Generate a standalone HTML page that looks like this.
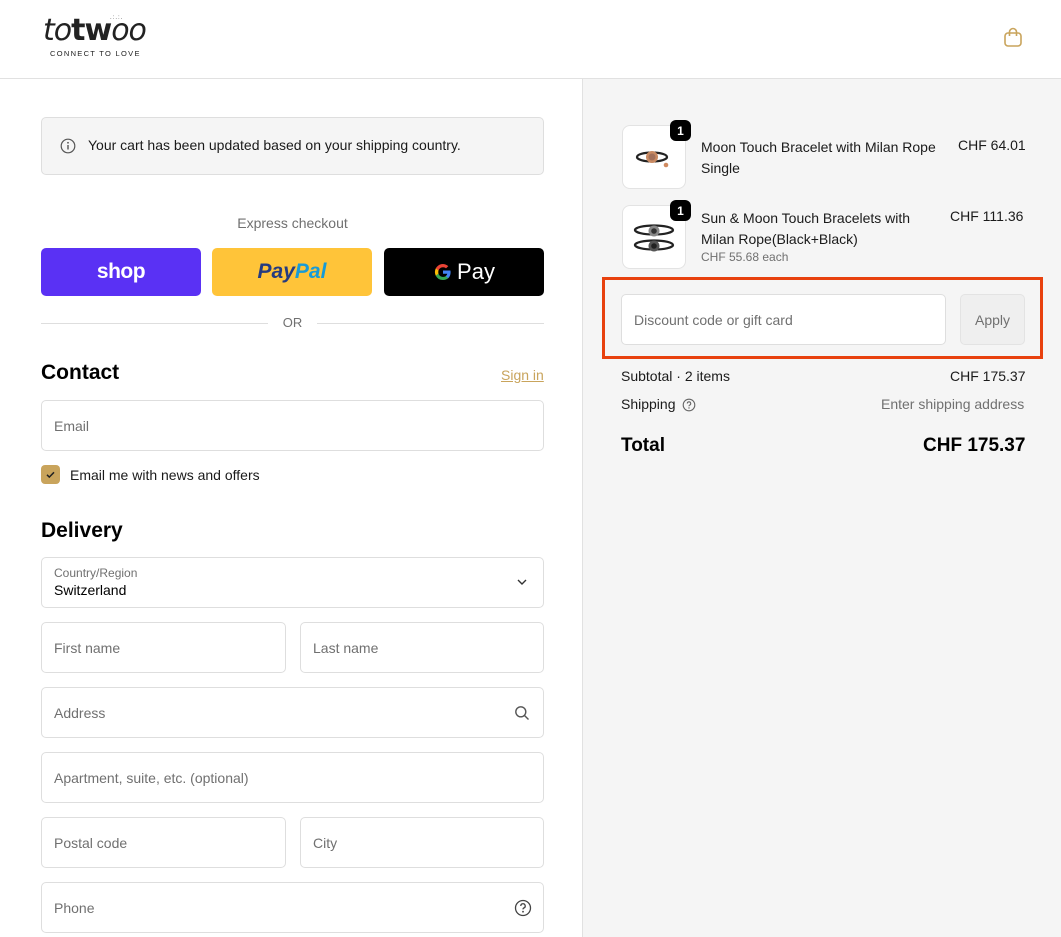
<!DOCTYPE html>
<html><head><meta charset="utf-8"><style>
*{box-sizing:border-box;margin:0;padding:0}
body{width:1061px;height:937px;overflow:hidden;background:#fff;font-family:"Liberation Sans",Arial,sans-serif;color:#000;position:relative;font-size:14px}
.a{position:absolute}
.in{position:absolute;border:1px solid #dedede;border-radius:5px;background:#fff;color:#707070;font-size:14px;padding-left:12px;display:flex;align-items:center}
.hdr{left:0;top:0;width:1061px;height:79px;border-bottom:1px solid #e1e1e1}
.right{left:582px;top:79px;width:479px;height:858px;background:#f5f5f5;border-left:1px solid #e1e1e1}
.thumb{position:absolute;width:64px;height:64px;border:1px solid #e3e3e3;border-radius:8px;background:#fff}
.badge{position:absolute;width:21px;height:21px;border-radius:6px;background:#000;color:#fff;font-size:12px;font-weight:bold;display:flex;align-items:center;justify-content:center}
</style></head><body>
<div class="a hdr"></div>
<div class="a" style="left:43px;top:12px;font-family:'DejaVu Sans',sans-serif;font-style:italic;font-weight:300;font-size:30px;letter-spacing:-1px;line-height:38px;color:#222">to<span style="font-style:normal;font-weight:bold;font-family:'DejaVu Sans'">tw</span>oo</div>
<div class="a" style="left:110px;top:15px;font-size:6px;color:#555;letter-spacing:1px">.:.:.</div>
<div class="a" style="left:50px;top:49px;font-size:7.5px;letter-spacing:1.3px;color:#222">CONNECT TO LOVE</div>
<svg class="a" style="left:1002px;top:26px" width="22" height="22" viewBox="0 0 22 22"><rect x="3" y="7" width="16" height="13" rx="3" fill="none" stroke="#c9a45c" stroke-width="1.6"/><path d="M7.5 10V6a3.5 3.5 0 0 1 7 0v4" fill="none" stroke="#c9a45c" stroke-width="1.6"/></svg>

<div class="a right"></div>

<div class="a" style="left:41px;top:117px;width:503px;height:58px;background:#f5f5f5;border:1px solid #dedede;border-radius:5px"></div>
<svg class="a" style="left:60px;top:138px" width="16" height="16" viewBox="0 0 16 16"><circle cx="8" cy="8" r="6.8" fill="none" stroke="#555" stroke-width="1.2"/><path d="M8 7v4.5" stroke="#555" stroke-width="1.4"/><circle cx="8" cy="4.8" r="0.9" fill="#555"/></svg>
<div class="a" style="left:88px;top:137px;font-size:14px;color:#1a1a1a">Your cart has been updated based on your shipping country.</div>

<div class="a" style="left:41px;top:215px;width:503px;text-align:center;color:#707070;font-size:14px">Express checkout</div>
<div class="a" style="left:41px;top:248px;width:160px;height:48px;background:#5a31f4;border-radius:5px;color:#fff;font-weight:bold;font-size:21px;display:flex;align-items:center;justify-content:center;letter-spacing:-0.5px">shop</div>
<div class="a" style="left:212px;top:248px;width:160px;height:48px;background:#ffc439;border-radius:5px;font-weight:bold;font-style:italic;font-size:21px;display:flex;align-items:center;justify-content:center"><span style="color:#253b80">Pay</span><span style="color:#179bd7">Pal</span></div>
<div class="a" style="left:384px;top:248px;width:160px;height:48px;background:#000;border-radius:5px;color:#fff;font-size:22px;display:flex;align-items:center;justify-content:center"><svg width="20" height="20" viewBox="0 0 20 20" style="margin-right:4px"><path d="M17.6 10.2c0-.6-.1-1.1-.2-1.7H10v3.2h4.3a3.7 3.7 0 0 1-1.6 2.4v2h2.6c1.5-1.4 2.3-3.4 2.3-5.9z" fill="#4285f4"/><path d="M10 18c2.2 0 4-.7 5.3-1.9l-2.6-2c-.7.5-1.6.8-2.7.8-2.1 0-3.9-1.4-4.5-3.3H2.8v2.1A8 8 0 0 0 10 18z" fill="#34a853"/><path d="M5.5 11.6a4.8 4.8 0 0 1 0-3.1V6.4H2.8a8 8 0 0 0 0 7.2z" fill="#fbbc05"/><path d="M10 5.2c1.2 0 2.2.4 3 1.2l2.3-2.3A8 8 0 0 0 2.8 6.4l2.7 2.1C6.1 6.6 7.9 5.2 10 5.2z" fill="#ea4335"/></svg>Pay</div>

<div class="a" style="left:41px;top:323px;width:227px;border-top:1px solid #dedede"></div>
<div class="a" style="left:317px;top:323px;width:227px;border-top:1px solid #dedede"></div>
<div class="a" style="left:270px;top:315px;width:45px;text-align:center;color:#707070;font-size:13px">OR</div>

<div class="a" style="left:41px;top:361px;font-size:21px;font-weight:bold">Contact</div>
<div class="a" style="left:501px;top:367px;font-size:14px;color:#c9a45c;text-decoration:underline">Sign in</div>
<div class="in" style="left:41px;top:400px;width:503px;height:51px">Email</div>
<div class="a" style="left:41px;top:465px;width:19px;height:19px;border-radius:4px;background:#c9a45c"></div>
<svg class="a" style="left:44px;top:468px" width="13" height="13" viewBox="0 0 13 13"><path d="M3 6.8l2.3 2.3L10 4.3" fill="none" stroke="#222" stroke-width="1.5"/></svg>
<div class="a" style="left:70px;top:467px;font-size:14px;color:#1a1a1a">Email me with news and offers</div>

<div class="a" style="left:41px;top:519px;font-size:21px;font-weight:bold">Delivery</div>
<div class="in" style="left:41px;top:557px;width:503px;height:51px;display:block;padding-top:8px"><div style="font-size:12px;color:#707070">Country/Region</div><div style="font-size:14px;color:#000;margin-top:2px">Switzerland</div></div>
<svg class="a" style="left:516px;top:577px" width="12" height="10" viewBox="0 0 12 10"><path d="M2 3l4 4 4-4" fill="none" stroke="#333" stroke-width="1.4"/></svg>
<div class="in" style="left:41px;top:622px;width:245px;height:51px">First name</div>
<div class="in" style="left:300px;top:622px;width:244px;height:51px">Last name</div>
<div class="in" style="left:41px;top:687px;width:503px;height:51px">Address</div>
<svg class="a" style="left:514px;top:705px" width="16" height="16" viewBox="0 0 16 16"><circle cx="6.8" cy="6.8" r="5" fill="none" stroke="#555" stroke-width="1.4"/><path d="M10.5 10.5l4 4" stroke="#555" stroke-width="1.4"/></svg>
<div class="in" style="left:41px;top:752px;width:503px;height:51px">Apartment, suite, etc. (optional)</div>
<div class="in" style="left:41px;top:817px;width:245px;height:51px">Postal code</div>
<div class="in" style="left:300px;top:817px;width:244px;height:51px">City</div>
<div class="in" style="left:41px;top:882px;width:503px;height:51px">Phone</div>
<svg class="a" style="left:514px;top:899px" width="18" height="18" viewBox="0 0 18 18"><circle cx="9" cy="9" r="7.5" fill="none" stroke="#444" stroke-width="1.3"/><path d="M6.8 7a2.2 2.2 0 1 1 3 2c-.6.3-.8.7-.8 1.4" fill="none" stroke="#444" stroke-width="1.3"/><circle cx="9" cy="12.7" r=".9" fill="#444"/></svg>

<div class="thumb" style="left:622px;top:125px"></div>
<svg class="a" style="left:628px;top:143px" width="52" height="32" viewBox="0 0 52 32"><ellipse cx="24" cy="14" rx="15" ry="4.5" fill="none" stroke="#222" stroke-width="2.3"/><circle cx="24" cy="14" r="6" fill="#c98a62"/><circle cx="24" cy="14" r="3.5" fill="#a2705a"/><circle cx="38" cy="22" r="2.3" fill="#d08a60"/></svg>
<div class="badge" style="left:670px;top:120px">1</div>
<div class="a" style="left:701px;top:137px;font-size:14px;line-height:21px;color:#1a1a1a">Moon Touch Bracelet with Milan Rope<br>Single</div>
<div class="a" style="left:958px;top:137px;font-size:14px;color:#1a1a1a">CHF 64.01</div>

<div class="thumb" style="left:622px;top:205px"></div>
<svg class="a" style="left:629px;top:217px" width="50" height="42" viewBox="0 0 50 42"><ellipse cx="25" cy="13" rx="19" ry="4.5" fill="none" stroke="#222" stroke-width="2.3"/><ellipse cx="25" cy="28" rx="19" ry="4.5" fill="none" stroke="#222" stroke-width="2.3"/><circle cx="25" cy="14" r="5.5" fill="#888"/><circle cx="25" cy="14" r="2.8" fill="#333"/><circle cx="25" cy="29" r="5.5" fill="#555"/><circle cx="25" cy="29" r="2.8" fill="#222"/></svg>
<div class="badge" style="left:670px;top:200px">1</div>
<div class="a" style="left:701px;top:208px;font-size:14px;line-height:21px;color:#1a1a1a">Sun &amp; Moon Touch Bracelets with<br>Milan Rope(Black+Black)</div>
<div class="a" style="left:701px;top:250px;font-size:12px;color:#707070">CHF 55.68 each</div>
<div class="a" style="left:950px;top:208px;font-size:14px;color:#1a1a1a">CHF 111.36</div>

<div class="a" style="left:602px;top:277px;width:441px;height:82px;border:3px solid #e8410e"></div>
<div class="in" style="left:621px;top:294px;width:325px;height:51px">Discount code or gift card</div>
<div class="a" style="left:960px;top:294px;width:65px;height:51px;border:1px solid #e3e3e3;border-radius:5px;background:#efefef;color:#707070;font-size:14px;display:flex;align-items:center;justify-content:center">Apply</div>

<div class="a" style="left:621px;top:368px;font-size:14px;color:#1a1a1a">Subtotal · 2 items</div>
<div class="a" style="left:950px;top:368px;font-size:14px;color:#1a1a1a">CHF 175.37</div>
<div class="a" style="left:621px;top:396px;font-size:14px;color:#1a1a1a">Shipping</div>
<svg class="a" style="left:682px;top:398px" width="14" height="14" viewBox="0 0 14 14"><circle cx="7" cy="7" r="5.8" fill="none" stroke="#666" stroke-width="1.1"/><path d="M5.3 5.5a1.7 1.7 0 1 1 2.3 1.6c-.5.2-.6.5-.6 1.1" fill="none" stroke="#666" stroke-width="1.1"/><circle cx="7" cy="10" r=".7" fill="#666"/></svg>
<div class="a" style="left:881px;top:396px;font-size:14px;color:#707070">Enter shipping address</div>
<div class="a" style="left:621px;top:435px;font-size:19px;font-weight:bold">Total</div>
<div class="a" style="left:923px;top:435px;font-size:19px;font-weight:bold">CHF 175.37</div>
</body></html>
